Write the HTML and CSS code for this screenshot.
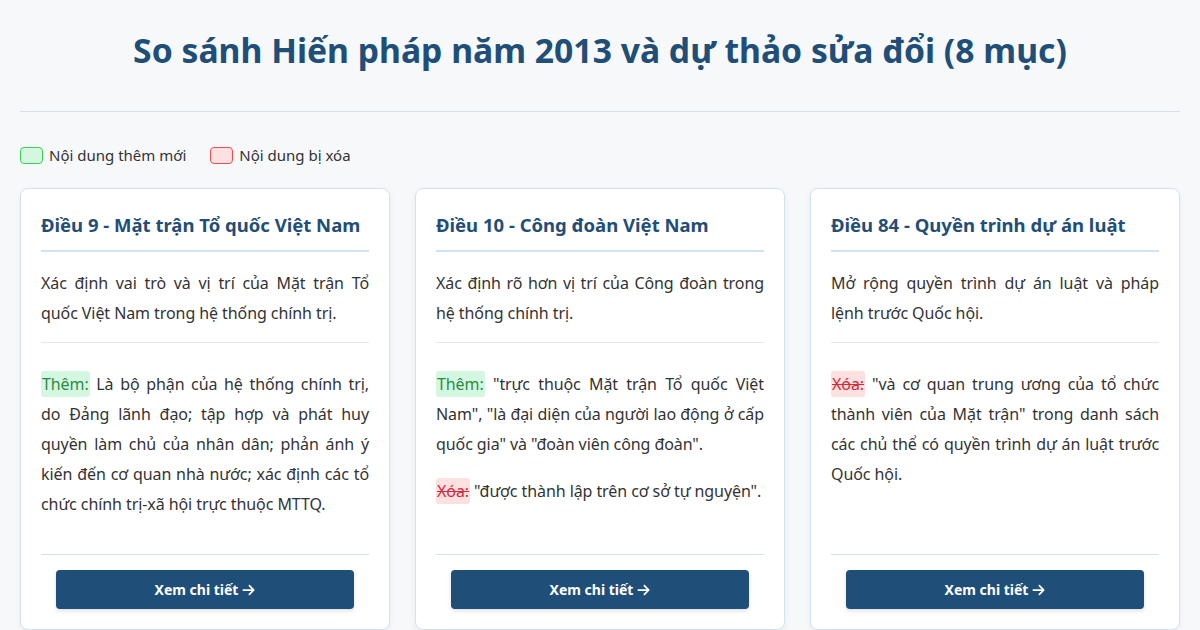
FILE: index.html
```html
<!DOCTYPE html>
<html lang="vi">
<head>
<meta charset="utf-8">
<title>So sánh Hiến pháp</title>
<link rel="stylesheet" href="styles.css">
</head>
<body>
<div class="page">
  <header class="header">
    <h1 class="title">So sánh Hiến pháp năm 2013 và dự thảo sửa đổi (8 mục)</h1>
  </header>
  <div class="legend">
    <div class="legend-item"><span class="swatch swatch-add"></span>Nội dung thêm mới</div>
    <div class="legend-item"><span class="swatch swatch-del"></span>Nội dung bị xóa</div>
  </div>
  <div class="cards">
    <article class="card">
      <h3 class="card-title">Điều 9 - Mặt trận Tổ quốc Việt Nam</h3>
      <p class="summary">Xác định vai trò và vị trí của Mặt trận Tổ quốc Việt Nam trong hệ thống chính trị.</p>
      <div class="changes">
        <p class="change"><span class="tag tag-add">Thêm:</span> Là bộ phận của hệ thống chính trị, do Đảng lãnh đạo; tập hợp và phát huy quyền làm chủ của nhân dân; phản ánh ý kiến đến cơ quan nhà nước; xác định các tổ chức chính trị-xã hội trực thuộc MTTQ.</p>
      </div>
      <div class="card-footer">
        <a class="btn" href="#">Xem chi tiết <svg class="arrow" viewBox="0 0 448 512" width="13" height="14"><path fill="currentColor" d="M438.6 278.6c12.5-12.5 12.5-32.8 0-45.3l-160-160c-12.5-12.5-32.8-12.5-45.3 0s-12.5 32.8 0 45.3L338.8 224 32 224c-17.7 0-32 14.3-32 32s14.3 32 32 32l306.7 0L233.4 393.4c-12.5 12.5-12.5 32.8 0 45.3s32.8 12.5 45.3 0l160-160z"/></svg></a>
      </div>
    </article>
    <article class="card">
      <h3 class="card-title">Điều 10 - Công đoàn Việt Nam</h3>
      <p class="summary">Xác định rõ hơn vị trí của Công đoàn trong hệ thống chính trị.</p>
      <div class="changes">
        <p class="change"><span class="tag tag-add">Thêm:</span> "trực thuộc Mặt trận Tổ quốc Việt Nam", "là đại diện của người lao động ở cấp quốc gia" và "đoàn viên công đoàn".</p>
        <p class="change"><span class="tag tag-del">Xóa:</span> "được thành lập trên cơ sở tự nguyện".</p>
      </div>
      <div class="card-footer">
        <a class="btn" href="#">Xem chi tiết <svg class="arrow" viewBox="0 0 448 512" width="13" height="14"><path fill="currentColor" d="M438.6 278.6c12.5-12.5 12.5-32.8 0-45.3l-160-160c-12.5-12.5-32.8-12.5-45.3 0s-12.5 32.8 0 45.3L338.8 224 32 224c-17.7 0-32 14.3-32 32s14.3 32 32 32l306.7 0L233.4 393.4c-12.5 12.5-12.5 32.8 0 45.3s32.8 12.5 45.3 0l160-160z"/></svg></a>
      </div>
    </article>
    <article class="card">
      <h3 class="card-title">Điều 84 - Quyền trình dự án luật</h3>
      <p class="summary">Mở rộng quyền trình dự án luật và pháp lệnh trước Quốc hội.</p>
      <div class="changes">
        <p class="change"><span class="tag tag-del">Xóa:</span> "và cơ quan trung ương của tổ chức thành viên của Mặt trận" trong danh sách các chủ thể có quyền trình dự án luật trước Quốc hội.</p>
      </div>
      <div class="card-footer">
        <a class="btn" href="#">Xem chi tiết <svg class="arrow" viewBox="0 0 448 512" width="13" height="14"><path fill="currentColor" d="M438.6 278.6c12.5-12.5 12.5-32.8 0-45.3l-160-160c-12.5-12.5-32.8-12.5-45.3 0s-12.5 32.8 0 45.3L338.8 224 32 224c-17.7 0-32 14.3-32 32s14.3 32 32 32l306.7 0L233.4 393.4c-12.5 12.5-12.5 32.8 0 45.3s32.8 12.5 45.3 0l160-160z"/></svg></a>
      </div>
    </article>
  </div>
</div>
</body>
</html>
```

FILE: styles.css
```css
* { box-sizing: border-box; }
html, body { margin: 0; padding: 0; }
body {
  background: #f6f8fa;
  font-family: "Noto Sans", "Open Sans", sans-serif;
  color: #333333;
  overflow: hidden;
}
.page {
  padding: 0 20px;
}
.header {
  padding: 28px 0 39px;
  border-bottom: 1px solid #d5e1ee;
  text-align: center;
}
.title {
  margin: 0;
  font-size: 33.7px;
  line-height: 44px;
  font-weight: 700;
  color: #1f4e79;
}
.legend {
  display: flex;
  gap: 24px;
  align-items: center;
  margin-top: 33px;
  height: 20px;
  font-size: 15px;
  color: #333;
}
.legend-item {
  display: flex;
  align-items: center;
  gap: 6px;
}
.swatch {
  display: inline-block;
  width: 23px;
  height: 17px;
  border-radius: 4px;
  border: 1px solid;
}
.swatch-add { background: #d4f7e2; border-color: #3ccf55; }
.swatch-del { background: #fde0e0; border-color: #ef4d4d; }
.cards {
  display: grid;
  grid-template-columns: repeat(3, 1fr);
  gap: 25px;
  margin-top: 23px;
}
.card {
  background: #ffffff;
  border: 1px solid #d3e2f2;
  border-radius: 8px;
  box-shadow: 0 2px 6px rgba(30, 60, 100, 0.06);
  padding: 20px 20px 20px;
  display: flex;
  flex-direction: column;
}
.card-title {
  margin: 0;
  padding-bottom: 10px;
  border-bottom: 2px solid #d3e2f2;
  font-size: 18.5px;
  line-height: 31px;
  font-weight: 700;
  color: #1f4e79;
}
.summary {
  margin: 0;
  padding: 16px 0 14px;
  border-bottom: 1px solid #e6e8eb;
  font-size: 16px;
  line-height: 30px;
  letter-spacing: -0.08px;
  text-align: justify;
}
.changes {
  flex: 1;
  padding: 26px 0 35px;
}
.change {
  margin: 0 0 17px;
  font-size: 16px;
  line-height: 30px;
  letter-spacing: -0.08px;
  text-align: justify;
}
.change:last-child { margin-bottom: 0; }
.tag {
  padding: 2px 1px;
  border-radius: 3px;
}
.tag-add { background: #d4f7e2; color: #2e8b47; }
.tag-del { background: #fde0e0; color: #d42a3a; text-decoration: line-through; }
.card-footer {
  border-top: 1px solid #d3e2f2;
  padding: 15px 15px 0;
}
.btn {
  display: flex;
  align-items: center;
  justify-content: center;
  gap: 4px;
  height: 39px;
  border-radius: 4px;
  background: #1f4e79;
  color: #ffffff;
  font-size: 14px;
  font-weight: 700;
  text-decoration: none;
  box-shadow: 0 2px 4px rgba(0, 0, 0, 0.12);
}
.arrow { display: block; }
```
